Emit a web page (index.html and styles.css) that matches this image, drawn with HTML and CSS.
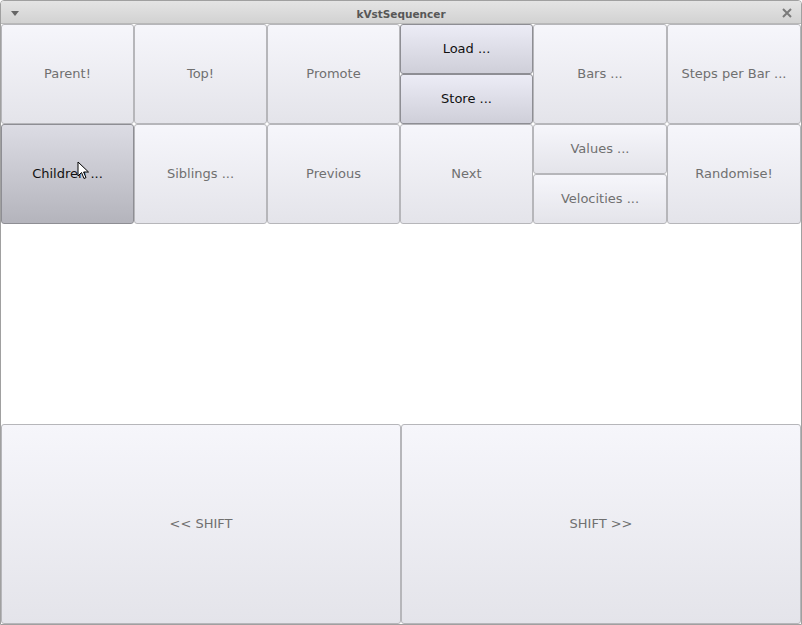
FILE: index.html
```html
<!DOCTYPE html>
<html>
<head>
<meta charset="utf-8">
<link rel="stylesheet" href="styles.css">
</head>
<body>
<div class="window">
  <div class="titlebar">
    <span class="menu-arrow"></span>
    <span class="title">kVstSequencer</span>
    <svg class="close" width="10" height="10" viewBox="0 0 10 10"><path d="M1 1 L9 9 M9 1 L1 9" stroke="#7a7a7a" stroke-width="2"/></svg>
  </div>
  <div class="content">
    <div class="grid">
      <button class="btn">Parent!</button>
      <button class="btn">Top!</button>
      <button class="btn">Promote</button>
      <div class="stack">
        <button class="btn active">Load ...</button>
        <button class="btn active">Store ...</button>
      </div>
      <button class="btn">Bars ...</button>
      <button class="btn">Steps per Bar ...</button>
      <button class="btn pressed">Children ...</button>
      <button class="btn">Siblings ...</button>
      <button class="btn">Previous</button>
      <button class="btn">Next</button>
      <div class="stack">
        <button class="btn">Values ...</button>
        <button class="btn">Velocities ...</button>
      </div>
      <button class="btn">Randomise!</button>
    </div>
    <div class="blank"></div>
    <div class="shift">
      <button class="btn">&lt;&lt; SHIFT</button>
      <button class="btn">SHIFT &gt;&gt;</button>
    </div>
  </div>
  <svg class="cursor" width="14" height="20" viewBox="0 0 14 20"><path d="M1 1 L1 15 L4.5 11.5 L7 17.5 L9 16.6 L6.6 11 L11.5 11 Z" fill="#fff" stroke="#000" stroke-width="1" stroke-linejoin="round"/></svg>
</div>
</body>
</html>
```
FILE: styles.css
```css
html, body {
  margin: 0;
  padding: 0;
  background: #ffffff;
}
.window {
  position: relative;
  width: 802px;
  height: 625px;
  box-sizing: border-box;
  border: 1px solid #a0a0a0;
  border-radius: 4px 4px 0 0;
  overflow: hidden;
  display: flex;
  flex-direction: column;
  font-family: "DejaVu Sans", sans-serif;
}
.titlebar {
  height: 22px;
  flex: none;
  display: flex;
  align-items: center;
  justify-content: center;
  position: relative;
  background: linear-gradient(#e4e4e4, #d2d2d2);
  border-bottom: 1px solid #b8b8b8;
}
.title {
  font-weight: bold;
  font-size: 10.5px;
  color: #575757;
  padding-top: 3px;
}
.menu-arrow {
  position: absolute;
  left: 10px;
  top: 10px;
  width: 0;
  height: 0;
  border-left: 4px solid transparent;
  border-right: 4px solid transparent;
  border-top: 5px solid #666;
}
.close {
  position: absolute;
  right: 9px;
  top: 7px;
}
.content {
  flex: 1;
  display: flex;
  flex-direction: column;
  background: #ffffff;
}
.grid {
  display: grid;
  grid-template-columns: 133px 133px 133px 133px 134px 1fr;
  grid-template-rows: 100px 100px;
}
.stack {
  display: grid;
  grid-template-rows: 1fr 1fr;
}
.blank {
  height: 200px;
}
.shift {
  flex: 1;
  display: grid;
  grid-template-columns: 400px 1fr;
}
.btn {
  margin: 0;
  font-family: "DejaVu Sans", sans-serif;
  font-size: 13px;
  color: #707070;
  border: 1px solid #b6b6ba;
  border-radius: 3px;
  background: linear-gradient(#f6f6fb, #e4e4ea);
  padding: 0 0 2px 0;
  white-space: nowrap;
  overflow: hidden;
  min-width: 0;
}
.btn.active {
  color: #111;
  border-color: #8e8e94;
  background: linear-gradient(#ececf6, #cfcfd9);
}
.btn.pressed {
  color: #111;
  border-color: #8e8e94;
  background: linear-gradient(#dcdce4, #b4b4bc);
}
.cursor {
  position: absolute;
  left: 76px;
  top: 160px;
}
```
